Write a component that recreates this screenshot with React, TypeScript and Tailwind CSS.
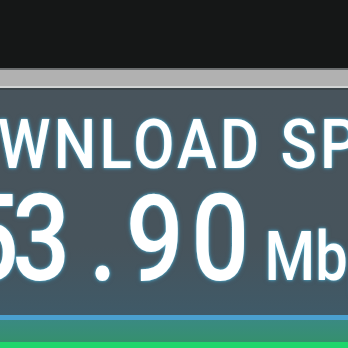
import React from "react";

export default function App() {
  const glow =
    "[text-shadow:0_0_3px_rgba(90,200,235,0.9),0_0_6px_rgba(60,170,215,0.5)]";
  return (
    <div className="w-[348px] h-[348px] overflow-hidden flex flex-col bg-[#151717] font-['Roboto',sans-serif]">
      <div className="h-[68px] shrink-0 bg-[#151717]" />
      <div className="h-[2px] shrink-0 bg-[#6a6d6e]" />
      <div className="h-[16px] shrink-0 bg-[#b1b1b1]" />
      <div className="h-[2px] shrink-0 bg-[#d2d4d4]" />
      <div className="h-[2px] shrink-0 bg-[#3b4449]" />
      <div className="flex-1 flex flex-col bg-[linear-gradient(to_bottom,#48545c_0%,#47545c_70%,#3f5a68_100%)]">
        <div className="h-[21px] shrink-0" />
        <div className={`h-[68px] shrink-0 whitespace-nowrap text-white font-medium text-[68px] leading-[68px] ${glow}`}>
          <div className="origin-left scale-x-[0.88] ml-[-89px] tracking-[3.7px]">DOWNLOAD SPEED</div>
        </div>
        <div className={`h-[120px] shrink-0 whitespace-nowrap text-white font-medium ${glow}`}>
          <div className="ml-[-39px] flex items-baseline origin-left scale-x-[0.85]">
            <span className="text-[120px] leading-[120px] mr-[-8px]">5</span>
            <span className="text-[120px] leading-[120px] mr-[22px]">3</span>
            <span className="text-[120px] leading-[120px] mr-[10px]">.</span>
            <span className="text-[120px] leading-[120px] mr-[9px]">9</span>
            <span className="text-[120px] leading-[120px] mr-[18px]">0</span>
            <span className="text-[68px] leading-[68px]">Mbps</span>
          </div>
        </div>
        <div className="flex-1" />
      </div>
      <div className="h-[5px] shrink-0 bg-[#4aa0cf]" />
      <div className="h-[22px] shrink-0 bg-[linear-gradient(to_bottom,#3a8a82,#35906e)]" />
      <div className="h-[6px] shrink-0 bg-[#1fd66c]" />
    </div>
  );
}
